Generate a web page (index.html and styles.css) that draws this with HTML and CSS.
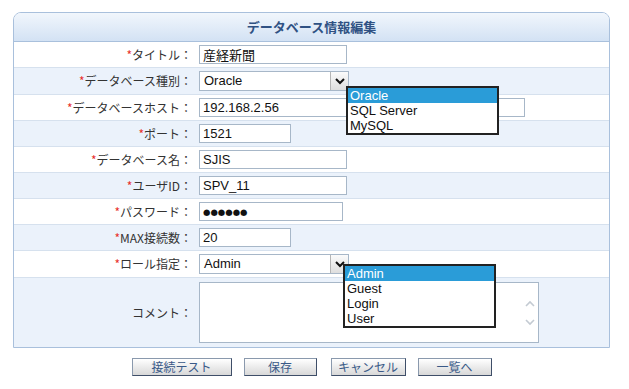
FILE: index.html
```html
<!DOCTYPE html>
<html lang="ja">
<head>
    <meta charset="UTF-8">
    <title>データベース情報編集</title>
    <link rel="stylesheet" href="styles.css">
</head>
<body>
    <div class="panel">
        <div class="panel-head">データベース情報編集</div>

        <div class="row">
            <div class="label"><span class="req">*</span>タイトル：</div>
            <div class="field"><input class="w148" type="text" value="産経新聞"></div>
        </div>
        <div class="row alt">
            <div class="label"><span class="req">*</span>データベース種別：</div>
            <div class="field">
                <div class="select">
                    <span class="select-value">Oracle</span>
                    <span class="select-arrow">
                        <svg width="12" height="10" viewBox="0 0 12 10"><path d="M2 3 L6 7 L10 3" fill="none" stroke="#111" stroke-width="2"/></svg>
                    </span>
                    <ul class="select-list db-list">
                        <li class="on">Oracle</li>
                        <li>SQL Server</li>
                        <li>MySQL</li>
                    </ul>
                </div>
            </div>
        </div>
        <div class="row">
            <div class="label"><span class="req">*</span>データベースホスト：</div>
            <div class="field"><input class="w326" type="text" value="192.168.2.56"></div>
        </div>
        <div class="row alt">
            <div class="label"><span class="req">*</span>ポート：</div>
            <div class="field"><input class="w92" type="text" value="1521"></div>
        </div>
        <div class="row">
            <div class="label"><span class="req">*</span>データベース名：</div>
            <div class="field"><input class="w148" type="text" value="SJIS"></div>
        </div>
        <div class="row alt">
            <div class="label"><span class="req">*</span>ユーザID：</div>
            <div class="field"><input class="w148" type="text" value="SPV_11"></div>
        </div>
        <div class="row">
            <div class="label"><span class="req">*</span>パスワード：</div>
            <div class="field"><input class="w144 pw" type="text" value="●●●●●●"></div>
        </div>
        <div class="row alt">
            <div class="label"><span class="req">*</span>MAX接続数：</div>
            <div class="field"><input class="w92" type="text" value="20"></div>
        </div>
        <div class="row">
            <div class="label"><span class="req">*</span>ロール指定：</div>
            <div class="field">
                <div class="select">
                    <span class="select-value">Admin</span>
                    <span class="select-arrow">
                        <svg width="12" height="10" viewBox="0 0 12 10"><path d="M2 3 L6 7 L10 3" fill="none" stroke="#111" stroke-width="2"/></svg>
                    </span>
                    <ul class="select-list role-list">
                        <li class="on">Admin</li>
                        <li>Guest</li>
                        <li>Login</li>
                        <li>User</li>
                    </ul>
                </div>
            </div>
        </div>
        <div class="row alt last">
            <div class="label">コメント：</div>
            <div class="field">
                <div class="memo">
                    <textarea></textarea>
                    <div class="memo-scroll">
                        <svg width="10" height="7" viewBox="0 0 10 7"><path d="M1 6 L5 2 L9 6" fill="none" stroke="#c3cad2" stroke-width="1.6"/></svg>
                        <svg width="10" height="7" viewBox="0 0 10 7"><path d="M1 1 L5 5 L9 1" fill="none" stroke="#c3cad2" stroke-width="1.6"/></svg>
                    </div>
                </div>
            </div>
        </div>
    </div>

    <div class="buttons">
        <button class="btn w100">接続テスト</button>
        <button class="btn w73">保存</button>
        <button class="btn w75">キャンセル</button>
        <button class="btn w74">一覧へ</button>
    </div>
</body>
</html>
```

FILE: styles.css
```css
body {
    font-family: "Noto Sans CJK JP", sans-serif;
    font-size: 12px;
    color: #333;
    background-color: #fff;
    margin: 0;
    padding: 0;
}
.panel {
    width: 597px;
    margin: 12px 0 0 13px;
    box-sizing: border-box;
    border: 1px solid #a9c0dc;
    border-radius: 8px 8px 0 0;
}
.panel-head {
    height: 28px;
    line-height: 28px;
    text-align: center;
    font-size: 13px;
    font-weight: bold;
    color: #2f5183;
    background: linear-gradient(#f1f6fc, #d3e2f4);
    border-bottom: 1px solid #a9c0dc;
    border-radius: 7px 7px 0 0;
}
.row {
    display: grid;
    grid-template-columns: 178px 1fr;
    align-items: center;
    padding: 3px 0;
    border-bottom: 1px solid #d6e1ee;
}
.row.alt {
    background-color: #ebf2fb;
}
.row.last {
    border-bottom: none;
    padding: 4px 0 4px;
}
.label {
    text-align: right;
    white-space: nowrap;
    line-height: 16px;
}
.req {
    color: #e8302c;
}
.field {
    padding-left: 7px;
}
input {
    box-sizing: border-box;
    height: 19px;
    margin: 0;
    padding: 0 3px;
    border: 1px solid #a7b7c8;
    font-family: "Liberation Sans", "Noto Sans CJK JP", sans-serif;
    font-size: 13px;
    color: #111;
    display: block;
}
.w92 { width: 92px; }
.w144 { width: 144px; }
.w148 { width: 148px; }
.w326 { width: 326px; }
.pw {
    font-family: "DejaVu Sans", sans-serif;
    font-size: 8.5px;
}
/* select box drawn by hand, with its open list */
.select {
    position: relative;
    display: flex;
    align-items: stretch;
    width: 150px;
    height: 20px;
    box-sizing: border-box;
    border: 1px solid #a7b7c8;
    background-color: #fff;
    font-family: "Liberation Sans", sans-serif;
    font-size: 13px;
    color: #111;
}
.select-value {
    flex: 1;
    padding-left: 4px;
    line-height: 18px;
}
.select-arrow {
    width: 17px;
    display: flex;
    align-items: center;
    justify-content: center;
    border-left: 1px solid #b5b5b5;
    background: linear-gradient(#fbfbfb, #dedede);
}
.select-list {
    position: absolute;
    z-index: 10;
    list-style: none;
    margin: 0;
    padding: 0;
    width: 149px;
    background-color: #fff;
    border: 2px solid #222;
}
.select-list li {
    height: 15px;
    line-height: 15px;
    padding-left: 2px;
}
.select-list li.on {
    background-color: #2a9cd8;
    color: #fff;
}
.db-list {
    left: 146px;
    top: 14px;
}
.role-list {
    left: 143px;
    top: 9px;
}
/* comment area */
.memo {
    display: flex;
    width: 340px;
    height: 61px;
    box-sizing: border-box;
    border: 1px solid #a7b7c8;
    background-color: #fff;
}
.memo textarea {
    flex: 1;
    border: none;
    resize: none;
    outline: none;
    margin: 0;
}
.memo-scroll {
    width: 16px;
    display: flex;
    flex-direction: column;
    justify-content: center;
    align-items: center;
    gap: 12px;
}
.buttons {
    display: flex;
    justify-content: center;
    gap: 12px;
    width: 623px;
    margin-top: 10px;
}
.btn {
    box-sizing: border-box;
    height: 18px;
    padding: 0;
    font-family: "Noto Sans CJK JP", sans-serif;
    font-size: 12px;
    line-height: 14px;
    color: #3a5a88;
    background: linear-gradient(#ffffff, #d8d8d8);
    border: 1px solid #8a99ad;
    border-right-color: #3e4e68;
    border-bottom-color: #3e4e68;
    cursor: pointer;
}
.w100 { width: 100px; }
.w73 { width: 73px; margin-right: 2px; }
.w75 { width: 75px; }
.w74 { width: 74px; }
```
